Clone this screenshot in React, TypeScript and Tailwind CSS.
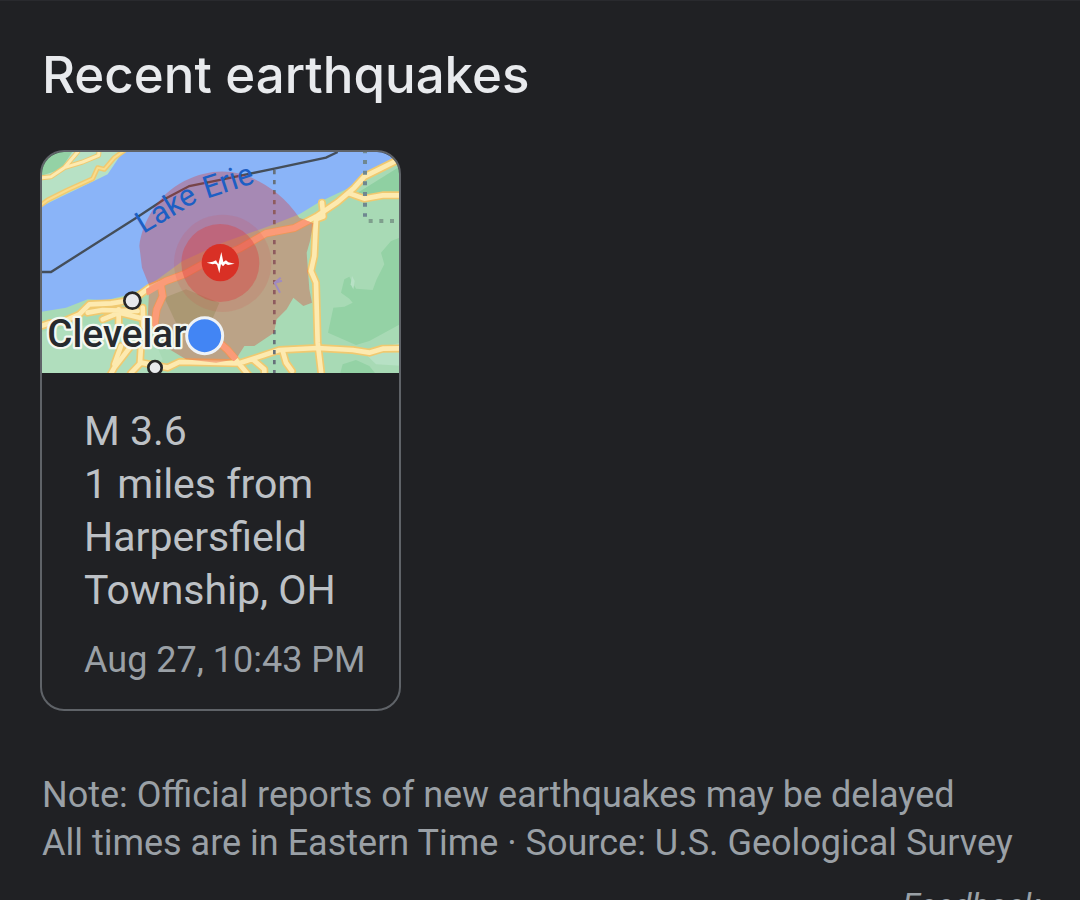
function EarthquakeMap() {
  return (
    <svg
      viewBox="18 18 1071 663"
      className="block w-full"
      role="img"
      aria-label="Map of the area around Lake Erie and Cleveland"
    >
      <defs>
        <clipPath id="land">
          <path d="M330 425L435 350L590 285L790 215L832 232L828 470L802 480L772 455L752 490L722 520L714 560L655 600L625 600L600 645L540 650L450 640L400 610L370 570L335 520Z" />
        </clipPath>
        <filter id="soft" x="0" y="0" width="1" height="1" colorInterpolationFilters="sRGB">
          <feGaussianBlur stdDeviation="2" />
        </filter>
      </defs>
      <g filter="url(#soft)">
        <rect x="0" y="0" width="1110" height="705" fill="#8ab4f8" />
        <path d="M0 0H272L215 85L180 102L60 160L0 190Z" fill="#b7e1c5" />
        <path d="M0 0H120L75 70L0 95Z" fill="#94d2a5" />
        <path
          d="M0 500L90 485L155 460L210 463L262 450L330 425L440 345L560 290L700 240L790 205L850 168L940 125L1010 78L1110 20V710H0Z"
          fill="#a8dab5"
        />
        <path d="M965 140L1110 50V150L1010 150Z" fill="#8fd0a2" />
        <path d="M1110 268L1065 285L1035 320L1045 355L1022 400L1010 432L960 428L940 392L925 400L915 440L940 458L950 470L925 482L892 485L876 560L960 597L1000 585L1110 525Z" fill="#94d2a5" />
        <path d="M948 390L956 405L952 430L944 415Z" fill="#b7e1c5" />
        <path d="M905 710L920 655L960 642L1000 660L1040 710Z" fill="#94d2a5" />
        <path d="M385 455L450 430L550 470L520 540L420 530Z" fill="#91ca98" />
        <path d="M985 620L1110 585V660L1020 655Z" fill="#b7e1c5" />
        <path d="M0 560L200 530L340 550L380 640L320 710H0Z" fill="#b0debd" />

        <g fill="none" stroke="#f0c970" strokeWidth="24" strokeLinejoin="round" strokeLinecap="round">
          <path d="M0 97L45 92L85 65L140 48L188 28L190 0M85 65L125 18M0 188L35 162L95 132L170 98L185 65L205 70L235 35L270 10" strokeWidth="15" />
          <path d="M0 545L40 532L80 527L130 505L160 475L225 472L290 462L340 425L390 405L445 385L500 355L610 308L690 262L775 246L840 212L905 168L955 125L985 92L1100 35" />
          <path d="M940 142L985 158L1040 148H1110M858 170L862 212L840 220L835 330L825 375L840 410L845 590L858 700" />
          <path d="M0 710H210L235 665L285 600M285 681L315 650L395 665L430 648L610 652L730 612L845 606L950 612L1000 620L1040 608L1110 607M545 585L575 612L640 690M650 640L685 670V700M740 615L750 650L768 675" />
          <path d="M375 420L380 450L362 490L355 540M155 500L200 492L305 495M200 520L250 500L330 520M248 490V540M320 485L322 540M255 600L235 655M315 600L312 650" />
        </g>
        <g fill="none" stroke="#fdeab0" strokeWidth="14" strokeLinejoin="round" strokeLinecap="round">
          <path d="M0 97L45 92L85 65L140 48L188 28L190 0M85 65L125 18" strokeWidth="9" />
          <path d="M0 188L35 162L95 132L170 98L185 65L205 70L235 35L270 10" strokeWidth="6" stroke="#f9dc8c" />
          <path d="M0 545L40 532L80 527L130 505L160 475L225 472L290 462L340 425L390 405L445 385L500 355L610 308L690 262L775 246L840 212L905 168L955 125L985 92L1100 35" />
          <path d="M940 142L985 158L1040 148H1110M858 170L862 212L840 220L835 330L825 375L840 410L845 590L858 700" />
          <path d="M0 710H210L235 665L285 600M285 681L315 650L395 665L430 648L610 652L730 612L845 606L950 612L1000 620L1040 608L1110 607M545 585L575 612L640 690M650 640L685 670V700M740 615L750 650L768 675" />
          <path d="M375 420L380 450L362 490L355 540M155 500L200 492L305 495M200 520L250 500L330 520M248 490V540M320 485L322 540M255 600L235 655M315 600L312 650" />
        </g>

        <path d="M0 378H45L300 216L385 160L460 120L560 100L715 68L870 35L905 18" fill="none" stroke="#444e5a" strokeWidth="7" />
        <path d="M715 72V710" fill="none" stroke="#66707a" strokeWidth="8" strokeDasharray="13 17" />
        <path d="M987 10V212" fill="none" stroke="#6f8790" strokeWidth="12" strokeDasharray="12 20" />
        <path d="M998 225H1089" fill="none" stroke="#7f9f8d" strokeWidth="12" strokeDasharray="12 20" />

        <path
          d="M340 420L318 365L310 300C318 230 365 145 445 105C490 82 540 72 585 78C660 88 740 140 790 215L832 232L822 285L812 320L820 430L828 470L802 480L772 455L752 490L722 520L714 560L655 600L625 600L600 640L540 650L450 640L400 610L370 570L335 520Z"
          fill="#e32e25"
          fillOpacity="0.32"
        />
        <g clipPath="url(#land)" fill="none" stroke="#fb9b78" strokeWidth="19">
          <path d="M330 440L390 405L445 385L500 355L610 308L690 262L775 246L820 222" />
          <path d="M375 420L380 450L362 490L355 540M545 585L575 612L600 640" />
        </g>
        <path d="M734 395L716 410L732 440M716 410L738 404" fill="none" stroke="#a08bc0" strokeWidth="6" />
      </g>
      <g fill="#1d5fc4" fontFamily="Roboto, sans-serif" fontSize="92">
        <text transform="translate(322 264) rotate(-31)">Lake</text>
        <text transform="translate(512 158) rotate(-18)">Erie</text>
      </g>

      <circle cx="560" cy="352" r="146" fill="#d93c3c" fillOpacity="0.13" />
      <circle cx="553" cy="351" r="117" fill="#d94040" fillOpacity="0.4" />
      <circle cx="553" cy="350" r="56" fill="#d93025" />
      <path
        d="M512 350L530 347L540 343L547 355L556 318L562 348L570 343L577 349L596 353L576 357L568 353L561 361L555 354L550 382L543 356L537 353L530 355Z"
        fill="#fff"
      />

      <g fill="#e8eaed" stroke="#272727" strokeWidth="8">
        <circle cx="289" cy="464" r="24" />
        <circle cx="357" cy="665" r="20" />
      </g>
      <text
        x="34"
        y="604"
        fill="#272a2e"
        stroke="#f4f8f2"
        strokeWidth="14"
        strokeLinejoin="round"
        paintOrder="stroke"
        fontFamily="Roboto, sans-serif"
        fontWeight="500"
        fontSize="116"
      >
        Clevelar
      </text>
      <circle cx="506" cy="569" r="54" fill="#4285f4" stroke="#eef2f6" strokeWidth="9" />
    </svg>
  );
}

export default function App() {
  return (
    <div className="h-screen overflow-hidden border-t border-[#292a2e] bg-[#202124] font-[Roboto,sans-serif]">
      <main className="px-10 pt-10">
        <h1 className="px-[2px] font-[Inter,sans-serif] text-[51px] leading-[68px] font-medium text-[#e8eaed]">
          Recent earthquakes
        </h1>
        <article className="mt-[41px] w-full max-w-[361px] overflow-hidden rounded-3xl border-2 border-[#5f6368]">
          <EarthquakeMap />
          <div className="pt-8 pr-8 pb-[25px] pl-[42px]">
            <p className="text-[41px] leading-[53px] text-[#bdc1c6]">
              M 3.6
              <br />
              1 miles from
              <br />
              Harpersfield
              <br />
              Township, OH
            </p>
            <time className="mt-[19px] block text-[36px] leading-[48px] whitespace-nowrap text-[#9aa0a6]">
              Aug 27, 10:43 PM
            </time>
          </div>
        </article>
        <p className="mt-[60px] px-[2px] text-[36px] leading-[48px] text-[#9aa0a6]">
          Note: Official reports of new earthquakes may be delayed
          <br />
          All times are in Eastern Time · Source: U.S. Geological Survey
        </p>
        <div className="mt-[18px] flex justify-end">
          <a href="#feedback" className="text-[33px] leading-[42px] text-[#9aa0a6] italic">
            Feedback
          </a>
        </div>
      </main>
    </div>
  );
}
